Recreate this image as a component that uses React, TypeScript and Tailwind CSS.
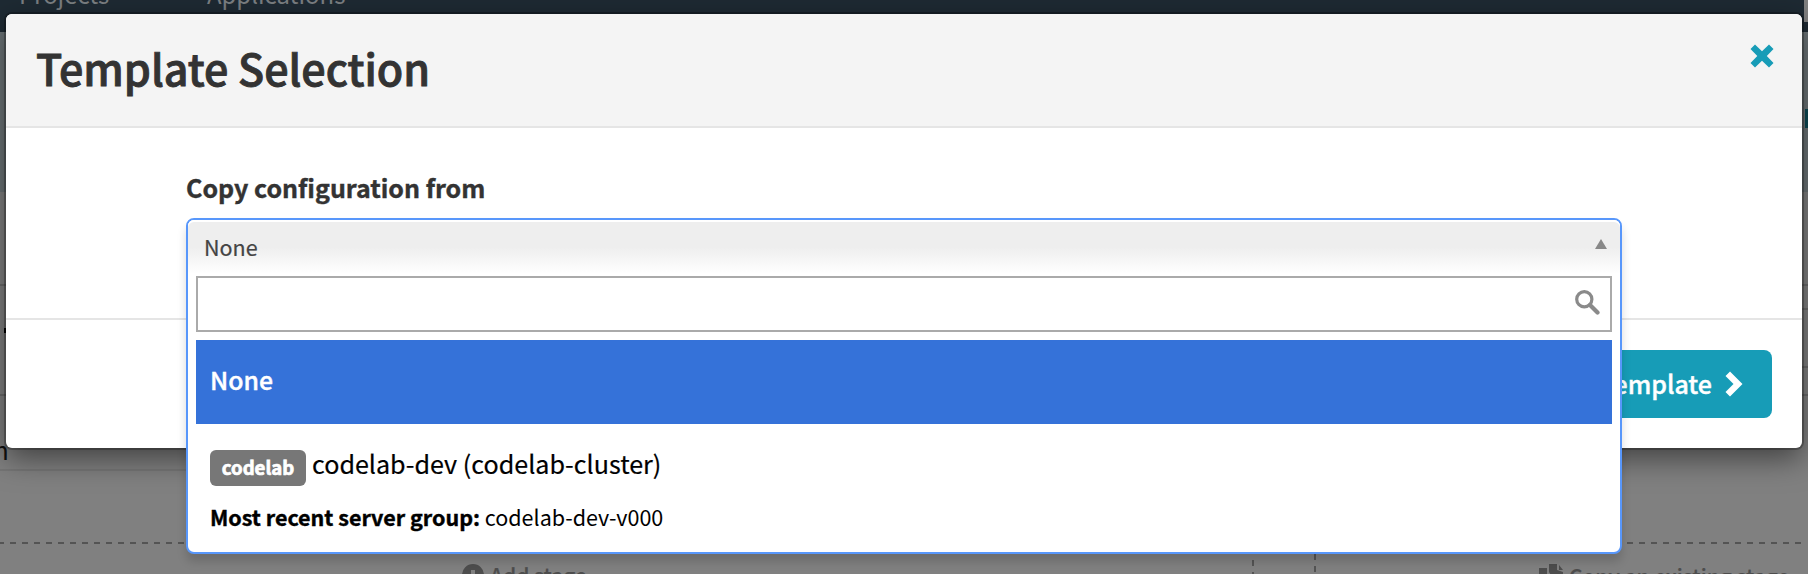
import React from "react";

const Glyph = ({ d, box, className }: { d: string; box: string; className: string }) => (
  <svg viewBox={box} className={className} fill="currentColor" aria-hidden="true">
    <path d={d} />
  </svg>
);

function Backdrop() {
  return (
    <div className="absolute inset-0 overflow-hidden bg-[#808080]">
      <div className="relative h-8 bg-[#1e2a33] whitespace-nowrap text-[23.9px] leading-[24px] text-[#7b7f82]">
        <span className="absolute left-[19px] -top-[18px]">Projects</span>
        <span className="absolute left-[207px] -top-[18px]">Applications</span>
        <div className="absolute right-0 top-0 h-[22px] w-1 bg-[#808080]" />
      </div>
      <div className="h-[160px] bg-[#6c7477]" />
      <div className="absolute right-0 top-[109px] h-[19px] w-[3px] bg-[#0d4a55]" />
      <div className="absolute left-0 top-[284px] h-[2px] w-2 bg-[#6b6b6b]" />
      <div className="absolute left-[4px] top-[328px] h-[5px] w-1 bg-black" />
      <div className="absolute left-0 top-[394px] h-[2px] w-2 bg-[#6b6b6b]" />
      <div className="absolute right-0 top-[284px] h-[2px] w-2 bg-[#6b6b6b]" />
      <div className="absolute right-0 top-[308px] h-[2px] w-2 bg-[#6b6b6b]" />
      <div className="absolute right-0 top-[366px] h-[2px] w-2 bg-[#6b6b6b]" />
      <div className="absolute right-0 top-[394px] h-[2px] w-2 bg-[#6b6b6b]" />
      <span className="absolute left-[-7px] top-[436px] text-[26px] leading-[26px] text-[#111]">n</span>
      <div className="absolute left-0 top-[469px] h-[2px] w-[190px] bg-[#767676]" />
      <div className="absolute left-[-2px] top-[542px] h-[2px] w-[1256px] bg-[repeating-linear-gradient(90deg,#545454_0_6px,transparent_6px_12px)]" />
      <div className="absolute left-[1315px] top-[542px] h-[2px] w-[488px] bg-[repeating-linear-gradient(90deg,#545454_0_6px,transparent_6px_12px)]" />
      <div className="absolute left-[1252px] top-[548px] h-[40px] w-[2px] bg-[repeating-linear-gradient(180deg,#545454_0_6px,transparent_6px_12px)]" />
      <div className="absolute left-[1314px] top-[554px] h-[40px] w-[2px] bg-[repeating-linear-gradient(180deg,#545454_0_6px,transparent_6px_12px)]" />
      <div className="absolute left-[462px] top-[564px] flex gap-[6px] text-[#4d4d4d]">
        <Glyph box="0 0 22 22" className="h-[22px] w-[22px]" d="M11 0a11 11 0 1 0 0 22a11 11 0 0 0 0-22M9 6h4v10H9z" />
        <span className="whitespace-nowrap text-[20.9px] leading-[22px] font-medium [-webkit-text-stroke:0.2px]">Add stage</span>
      </div>
      <div className="absolute left-[1539px] top-[564px] flex gap-[6px] text-[#4d4d4d]">
        <Glyph box="0 0 24 24" className="h-[24px] w-[24px]" d="M0 4h8v20H0zM10 0h8v6l6 2v16H19L10 8zM20 1l4 5h-4z" />
        <span className="whitespace-nowrap text-[20.9px] leading-[24px] font-medium [-webkit-text-stroke:0.2px]">Copy an existing stage</span>
      </div>
    </div>
  );
}

function Dropdown() {
  return (
    <div className="absolute left-[180px] top-[204px] z-10 flex h-[336px] w-[1436px] flex-col rounded-lg border-2 border-[#5897fb] bg-white px-2 shadow-[0_8px_10px_rgba(0,0,0,0.15)]">
      <div className="-mx-2 flex h-[54px] shrink-0 items-center justify-between rounded-t-md bg-[linear-gradient(#eee_20%,#eee_50%,#fff_100%)] pl-4 pr-[13px] text-[#444] shadow-[inset_0_2px_0_#fff]">
        <span className="mb-px text-[21.5px] leading-[30px] [-webkit-text-stroke:0.2px]">None</span>
        <Glyph box="0 0 12 10" className="mb-[6px] h-[10px] w-3 text-[#888]" d="M6 0l6 10H0z" />
      </div>
      <div className="mt-[2px] flex h-14 shrink-0 justify-end border-2 border-[#aaa] bg-white pr-[10px] pt-3">
        <svg viewBox="0 0 25 25" className="h-[25px] w-[25px] text-[#8a8a8a]" fill="none" stroke="currentColor">
          <circle cx="9.3" cy="9.3" r="7.6" strokeWidth="3.2" />
          <path d="M15 15l7.5 7.5" strokeWidth="4.2" strokeLinecap="round" />
        </svg>
      </div>
      <div className="mt-2 flex h-[84px] shrink-0 items-center bg-[#3572d9] pb-[7px] pl-[14px] text-white">
        <span className="text-[24.8px] leading-9 font-medium [-webkit-text-stroke:0.4px]">None</span>
      </div>
      <div className="flex flex-col pl-[14px] pt-5 text-black">
        <div className="flex h-10 items-center whitespace-nowrap">
          <span className="mt-2 flex h-9 w-24 items-center justify-center rounded-md bg-[#777] pb-[3px] text-[18.6px] font-bold text-white [-webkit-text-stroke:0.7px]">codelab</span>
          <span className="ml-[6px] pb-[3px] text-[25.1px] leading-9 [-webkit-text-stroke:0.2px]">codelab-dev (codelab-cluster)</span>
        </div>
        <div className="mt-4 whitespace-nowrap text-[21.5px] leading-[34px]">
          <b className="font-bold [-webkit-text-stroke:0.4px]">Most recent server group:</b> codelab-dev-v000
        </div>
      </div>
    </div>
  );
}

export default function App() {
  return (
    <div className="relative h-[574px] w-[1808px] overflow-hidden font-['Noto_Sans_CJK_SC','Noto_Sans',sans-serif]">
      <Backdrop />
      <div className="relative ml-[6px] pt-[14px]">
        <section className="relative flex h-[434px] w-[1796px] flex-col rounded-md bg-white shadow-[0_0_0_2px_rgba(0,0,0,0.25),0_10px_30px_rgba(0,0,0,0.5)]">
          <header className="flex h-[114px] shrink-0 justify-between rounded-t-md border-b-2 border-[#e5e5e5] bg-[#f4f4f4] pl-[30px] pr-7">
            <h1 className="pt-5 text-[43px] leading-[66px] font-medium text-[#333] [-webkit-text-stroke:0.9px]">Template Selection</h1>
            <Glyph box="0 0 24 24" className="mt-[30px] h-6 w-6 text-[#179cb7]" d="M5 0.5L12 7.3L19 0.5L23.5 5L16.8 12L23.5 19L19 23.5L12 16.8L5 23.5L0.5 19L7.3 12L0.5 5Z" />
          </header>
          <div className="h-[192px] shrink-0 border-b-2 border-[#e5e5e5] pl-[180px] pt-[41px]">
            <label className="text-[25px] leading-9 font-bold text-[#333] [-webkit-text-stroke:0.4px]">Copy configuration from</label>
          </div>
          <footer className="flex justify-end pr-[30px] pt-[30px]">
            <button className="flex h-[68px] items-center rounded-lg bg-[#179cb7] pl-[28px] pr-[29px] text-[25px] text-white">
              <span className="pb-[3px] leading-9 font-medium [-webkit-text-stroke:0.4px]">Continue without any template</span>
              <Glyph box="0 0 18 26" className="ml-[13px] h-[26px] w-[18px]" d="M5 0.5L17.5 13L5 25.5L0.5 21L8.5 13L0.5 5Z" />
            </button>
          </footer>
          <Dropdown />
        </section>
      </div>
    </div>
  );
}
